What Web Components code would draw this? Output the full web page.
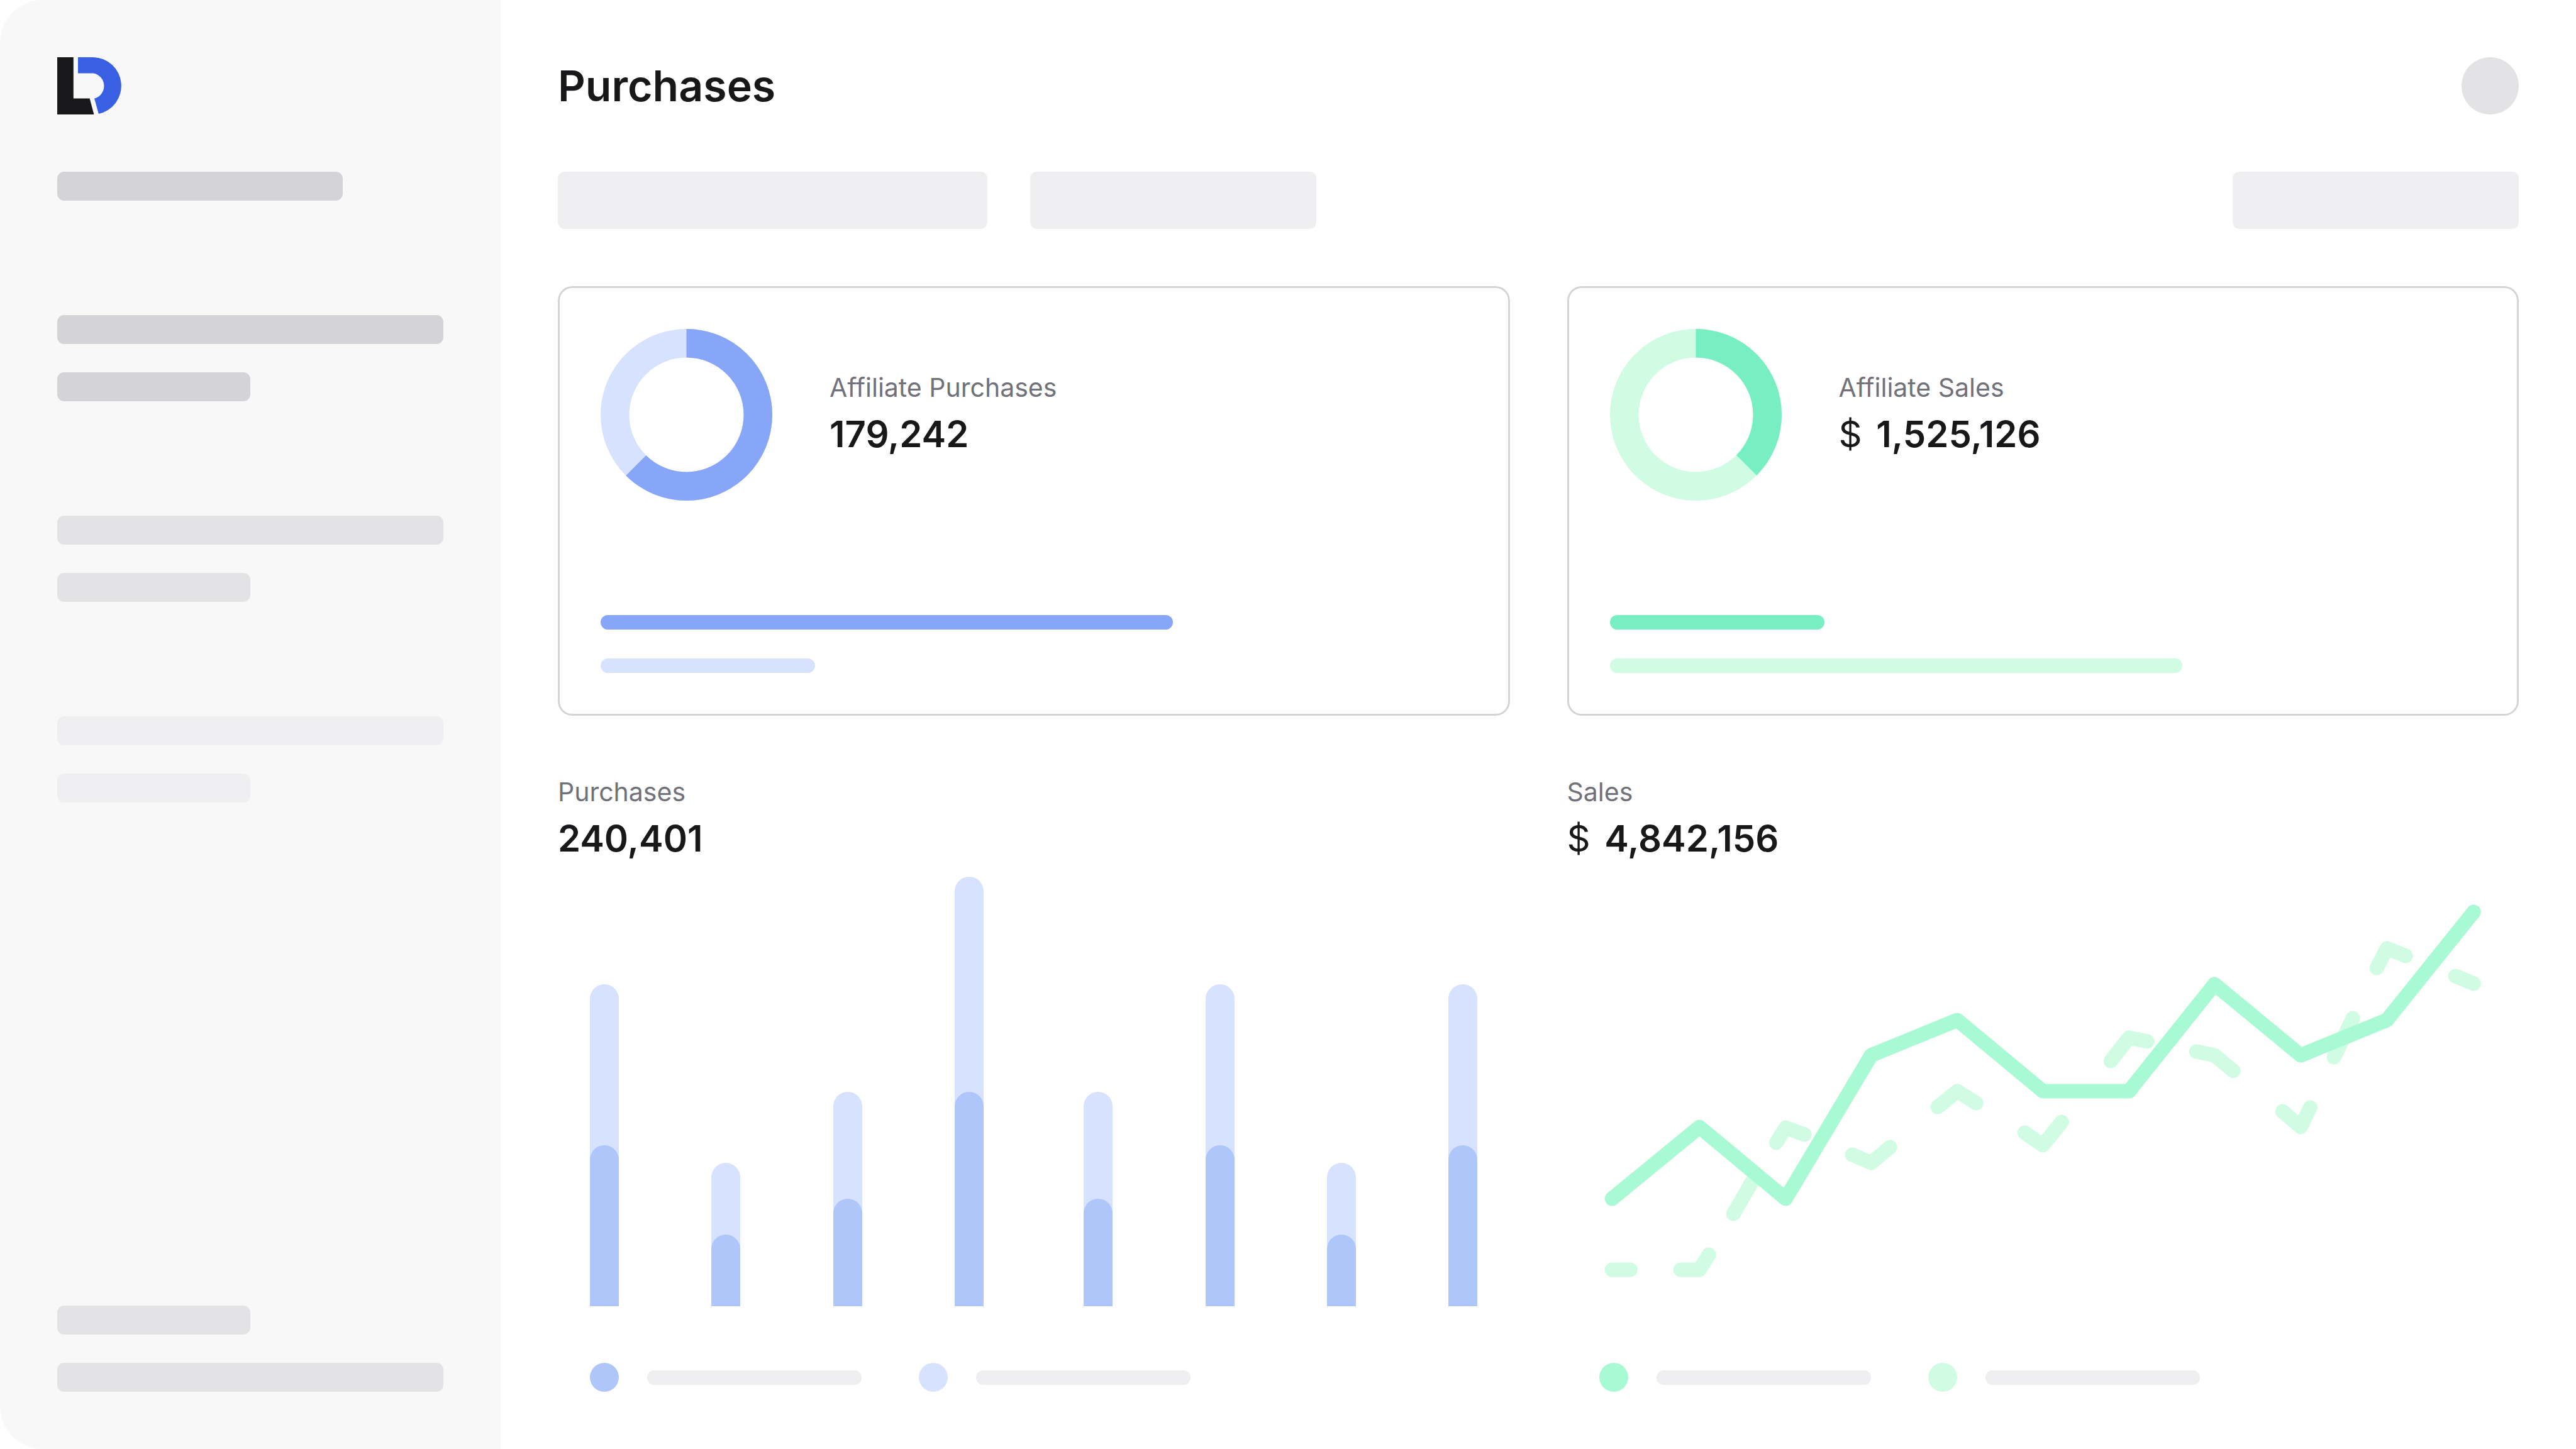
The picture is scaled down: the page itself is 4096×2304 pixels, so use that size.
<!DOCTYPE html>
<html lang="en">
<head>
<meta charset="utf-8">
<title>Purchases</title>
<style>
  html { background: #fff; }
  body {
    margin: 0;
    font-family: Inter, "Open Sans", sans-serif;
    color: #18181b;
    --ink: #18181b;
    --muted: #71717a;
    --line: #d4d4d6;
    --fill-1: #d4d4d8;
    --fill-2: #e3e3e5;
    --fill-3: #efeff1;
  }
</style>
</head>
<body>
<dashboard-app></dashboard-app>
<script>
const define = (name, html, setup) => {
  const template = document.createElement('template');
  template.innerHTML = html;
  customElements.define(name, class extends HTMLElement {
    constructor() {
      super();
      this.attachShadow({ mode: 'open' }).append(template.content.cloneNode(true));
    }
    connectedCallback() { if (setup) setup(this, this.shadowRoot); }
  });
};

define('skeleton-bar', `
  <style>
    :host { display: block; flex: none; height: 46px; border-radius: 11px; background: var(--fill-2); }
    :host([tone="dark"]) { background: var(--fill-1); }
    :host([tone="light"]) { background: var(--fill-3); }
    :host([size="field"]) { height: 91px; background: var(--fill-3); }
    :host([size="thin"]) { height: 23px; background: var(--fill-3); }
  </style>`);

define('brand-logo', `
  <style>
    :host { display: block; }
    svg { display: block; width: 103px; height: 91px; }
  </style>
  <svg viewBox="0 0 103 91" role="img" aria-label="Logo">
    <path fill="#18181b" d="M0 0H25.8V65.5H51.6L58.4 91H0Z"/>
    <path fill="#3960e2" d="M33 0H57.2A45.5 45.5 0 0 1 65.8 90L59 65.6A20.5 20.5 0 0 0 57.2 25.5H33Z"/>
  </svg>`);

define('side-bar', `
  <style>
    :host { display: flex; flex-direction: column; box-sizing: border-box; padding: 91px;
            background: #f8f8f8; border-radius: 68px 0 0 68px; }
    nav { display: flex; flex-direction: column; gap: 182px; margin-top: 91px; }
    .group { display: flex; flex-direction: column; gap: 45px; }
    .foot { margin-top: auto; }
    .most { width: 74%; } .half { width: 50%; }
  </style>
  <brand-logo></brand-logo>
  <nav aria-label="Main">
    <div class="group"><skeleton-bar tone="dark" class="most"></skeleton-bar></div>
    <div class="group"><skeleton-bar tone="dark"></skeleton-bar><skeleton-bar tone="dark" class="half"></skeleton-bar></div>
    <div class="group"><skeleton-bar></skeleton-bar><skeleton-bar class="half"></skeleton-bar></div>
    <div class="group"><skeleton-bar tone="light"></skeleton-bar><skeleton-bar tone="light" class="half"></skeleton-bar></div>
  </nav>
  <div class="group foot"><skeleton-bar class="half"></skeleton-bar><skeleton-bar></skeleton-bar></div>`);

define('stat-figure', `
  <style>
    :host { display: block; }
    .label { margin: 0; font-size: 41px; line-height: 60px; font-weight: 400; color: var(--muted); }
    .value { margin: 0; font-size: 58px; line-height: 88px; font-weight: 600; color: var(--ink); }
    .unit { font-weight: 400; margin-right: 8px; }
    .unit[hidden] { display: none; }
  </style>
  <h2 class="label"><slot name="label"></slot></h2>
  <p class="value"><span class="unit" hidden>$</span> <slot></slot></p>`,
  (host, root) => { root.querySelector('.unit').hidden = !host.hasAttribute('dollar'); });

define('ring-chart', `
  <style>
    :host { display: block; flex: none; width: 273px; height: 273px; }
    svg { display: block; width: 100%; height: 100%; }
    circle { fill: none; stroke-width: 20; }
    .rest { stroke: var(--soft); }
    .part { stroke: var(--strong); }
  </style>
  <svg viewBox="0 0 120 120" aria-hidden="true">
    <circle class="rest" cx="60" cy="60" r="50"/>
    <circle class="part" cx="60" cy="60" r="50" pathLength="100" transform="rotate(-90 60 60)"/>
  </svg>`,
  (host, root) => root.querySelector('.part').setAttribute('stroke-dasharray', host.getAttribute('percent') + ' 100'));

define('summary-card', `
  <style>
    :host { display: flex; flex-direction: column; justify-content: space-between; box-sizing: border-box;
            height: 683px; padding: 65px; border: 3px solid var(--line); border-radius: 23px; }
    .top { display: flex; align-items: center; gap: 91px; }
    .bars { display: flex; flex-direction: column; gap: 46px; }
    .bars div { height: 23px; border-radius: 12px; }
    .one { background: var(--strong); width: var(--one); }
    .two { background: var(--soft); width: var(--two); }
  </style>
  <div class="top"><slot name="ring"></slot><slot></slot></div>
  <div class="bars"><div class="one"></div><div class="two"></div></div>`);

define('bar-chart', `
  <style>
    :host { display: flex; gap: 159px; height: 683px; padding: 0 51px; }
    .half { flex: 1; display: flex; align-items: flex-end; justify-content: space-between; }
    .bar { display: flex; align-items: flex-end; width: 46px; border-radius: 23px 23px 0 0; background: #d7e3fe; }
    .bar div { width: 100%; height: 50%; border-radius: 23px 23px 0 0; background: #afc6fb; }
  </style>
  <div class="half"></div><div class="half"></div>`,
  (host, root) => {
    const values = host.getAttribute('values').split(' ');
    const halves = root.querySelectorAll('.half');
    values.forEach((value, i) => {
      const bar = document.createElement('div');
      bar.className = 'bar';
      bar.style.height = value / 3 + '%';
      bar.append(document.createElement('div'));
      halves[i < values.length / 2 ? 0 : 1].append(bar);
    });
  });

define('line-chart', `
  <style>
    :host { display: block; height: 683px; }
    svg { display: block; width: 100%; height: 100%; }
    path { fill: none; stroke-width: 23; stroke-linecap: round; stroke-linejoin: round; }
  </style>
  <svg viewBox="0 0 1513 683" aria-hidden="true">
    <path stroke="#d0fce4" d="M71 625H100M180 625H210L225 601M264 536L293 486M332 423L347 399L377 410M453 442L483 455L513 430M589 366L620 341L650 360M727 407L756 427L786 390M864 293L893 256L922 262M1000 278L1029 284L1059 309M1137 373L1166 398L1181 367M1219 287L1249 225M1287 145L1303 114L1333 126M1412 158L1441 170"/>
    <path stroke="#a7fad4" d="M71 512L210 398L347 512L483 284L620 228L756 341H893L1029 171L1166 284L1303 228L1441 56"/>
  </svg>`);

define('chart-legend', `
  <style>
    :host { display: flex; gap: 91px; padding: 0 51px; }
    .item { display: flex; align-items: center; gap: 45px; }
    .dot { width: 46px; height: 46px; border-radius: 50%; }
    .first { background: var(--strong); }
    .second { background: var(--soft); }
    skeleton-bar { width: 341px; }
  </style>
  <div class="item"><div class="dot first"></div><skeleton-bar size="thin"></skeleton-bar></div>
  <div class="item"><div class="dot second"></div><skeleton-bar size="thin"></skeleton-bar></div>`);

define('chart-panel', `
  <style>
    :host { display: block; }
    .plot { margin: 17px 0 90px; }
  </style>
  <slot name="figure"></slot>
  <div class="plot"><slot></slot></div>
  <slot name="legend"></slot>`);

define('dashboard-app', `
  <style>
    :host { display: grid; grid-template-columns: 796px minmax(0, 1fr); min-height: 100vh; }
    main { display: flex; flex-direction: column; gap: 91px; padding: 91px 91px 0; }
    header { display: flex; align-items: center; justify-content: space-between; height: 91px; }
    h1 { margin: 0; font-size: 68px; line-height: 91px; font-weight: 600; }
    .avatar { width: 91px; height: 91px; padding: 0; border: 0; border-radius: 50%; background: var(--fill-2); }
    .filters { display: flex; gap: 68px; }
    .wide { width: 683px; } .narrow { width: 455px; } .end { margin-left: auto; }
    .grid { display: grid; grid-template-columns: 1fr 1fr; gap: 91px; }
    .blue { --strong: #88a6f8; --soft: #d7e3fe; --one: 910px; --two: 341px; }
    .green { --strong: #78efc3; --soft: #d0fce4; --one: 341px; --two: 910px; }
    chart-legend.blue { --strong: #afc6fb; }
    chart-legend.green { --strong: #a7fad4; }
  </style>
  <side-bar></side-bar>
  <main>
    <header><h1>Purchases</h1><button class="avatar" type="button" aria-label="Account"></button></header>
    <div class="filters">
      <skeleton-bar size="field" class="wide"></skeleton-bar>
      <skeleton-bar size="field" class="narrow"></skeleton-bar>
      <skeleton-bar size="field" class="narrow end"></skeleton-bar>
    </div>
    <div class="grid">
      <summary-card class="blue">
        <ring-chart slot="ring" percent="62.5"></ring-chart>
        <stat-figure><span slot="label">Affiliate Purchases</span>179,242</stat-figure>
      </summary-card>
      <summary-card class="green">
        <ring-chart slot="ring" percent="37.5"></ring-chart>
        <stat-figure dollar><span slot="label">Affiliate Sales</span>1,525,126</stat-figure>
      </summary-card>
      <chart-panel>
        <stat-figure slot="figure"><span slot="label">Purchases</span>240,401</stat-figure>
        <bar-chart values="225 100 150 300 150 225 100 225"></bar-chart>
        <chart-legend slot="legend" class="blue"></chart-legend>
      </chart-panel>
      <chart-panel>
        <stat-figure slot="figure" dollar><span slot="label">Sales</span>4,842,156</stat-figure>
        <line-chart></line-chart>
        <chart-legend slot="legend" class="green"></chart-legend>
      </chart-panel>
    </div>
  </main>`);
</script>
</body>
</html>
